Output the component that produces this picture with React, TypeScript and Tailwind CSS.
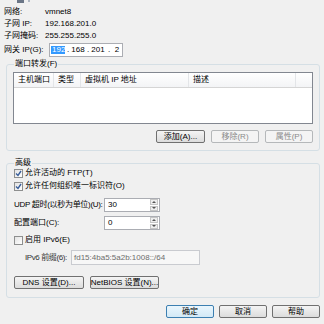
import { FC, ReactNode } from "react";

const font = { fontFamily: '"Liberation Sans", "Noto Sans CJK SC", sans-serif' };

const Btn: FC<{ w: string; children: ReactNode; disabled?: boolean; def?: boolean }> = ({ w, children, disabled, def }) => (
  <div
    className={`${w} h-[13px] flex items-center justify-center rounded-[2px] border leading-none ${
      disabled
        ? "border-[#b5b8ba] bg-[#f4f4f4] text-[#8a8a8a]"
        : def
        ? "border-[#3c7fb1] bg-linear-to-b from-[#eaf6fd] to-[#d3e9f6]"
        : "border-[#707070] bg-linear-to-b from-[#f4f4f4] to-[#dcdcdc]"
    }`}
  >
    {children}
  </div>
);

const Check: FC<{ on?: boolean; label: string }> = ({ on, label }) => (
  <div className="flex items-center h-[10px] leading-none">
    <div className="w-[9px] h-[9px] border border-[#8e8f8f] bg-linear-to-br from-[#e3e3e3] to-white flex items-center justify-center">
      {on && (
        <svg width="7" height="7" viewBox="0 0 7 7">
          <path d="M1 3.5 L3 5.5 L6 1" stroke="#3a5f9b" strokeWidth="1.4" fill="none" />
        </svg>
      )}
    </div>
    <span className="ml-[2px]">{label}</span>
  </div>
);

const Spin: FC<{ value: string }> = ({ value }) => (
  <div className="w-[56px] h-[14px] border border-[#abadb3] bg-white flex items-center">
    <span className="pl-[3px] flex-1 leading-none">{value}</span>
    <div className="w-[8px] h-[12px] mr-[1px] flex flex-col gap-[1px]">
      <div className="flex-1 border border-[#c5c5c5] bg-[#eeeeee] flex items-center justify-center">
        <div className="w-0 h-0 border-l-[2px] border-r-[2px] border-b-[2px] border-l-transparent border-r-transparent border-b-[#555]" />
      </div>
      <div className="flex-1 border border-[#c5c5c5] bg-[#eeeeee] flex items-center justify-center">
        <div className="w-0 h-0 border-l-[2px] border-r-[2px] border-t-[2px] border-l-transparent border-r-transparent border-t-[#555]" />
      </div>
    </div>
  </div>
);

const Info: FC<{ label: string; value: string }> = ({ label, value }) => (
  <div className="flex items-center h-[12px] leading-none">
    <span className="w-[41px]">{label}</span>
    <span>{value}</span>
  </div>
);

const App: FC = () => {
  return (
    <div style={font} className="w-[324px] h-[324px] bg-[#f0f0f0] text-[8px] text-black overflow-hidden flex flex-col whitespace-nowrap">
      <div className="h-[6px] flex items-start pl-[17px] gap-[4px]">
        <div className="w-[7px] h-[3px] bg-[#6a7586]" />
        <div className="w-[2px] h-[2px] bg-[#b0b8c4]" />
      </div>
      <div className="pl-[4px] flex flex-col">
        <Info label="网络:" value="vmnet8" />
        <Info label="子网 IP:" value="192.168.201.0" />
        <Info label="子网掩码:" value="255.255.255.0" />
        <div className="flex items-center h-[14px] mt-[1px] leading-none">
          <span className="w-[45px]">网关 IP(G):</span>
          <div className="w-[74px] h-[14px] border border-[#abadb3] bg-white flex items-center pl-[1px]">
            <span className="bg-[#3399ff] text-white px-[1px] w-[14px]">192</span>
            <span className="w-[6px] text-center">.</span>
            <span className="w-[14px] text-center">168</span>
            <span className="w-[6px] text-center">.</span>
            <span className="w-[14px] text-center">201</span>
            <span className="w-[8px] text-center">.</span>
            <span className="w-[8px] text-center">2</span>
          </div>
        </div>
      </div>

      <div className="ml-[6px] w-[314px] mt-[7px] border border-[#d5dfe5] rounded-[3px] pl-[6px] pr-[5px] pb-[7px]">
        <div className="-mt-[6px] ml-[1px] w-fit bg-[#f0f0f0] px-[1px] leading-[10px]">端口转发(F)</div>
        <div className="mt-[3px] w-[300px] h-[52px] border border-[#828790] bg-white">
          <div className="h-[15px] flex border-b border-[#d5d5d5] bg-linear-to-b from-white to-[#f3f4f6] leading-none">
            <div className="w-[40px] flex items-center pl-[4px] border-r border-[#e3e5e8] overflow-hidden">主机端口</div>
            <div className="w-[27px] flex items-center pl-[4px] border-r border-[#e3e5e8] overflow-hidden">类型</div>
            <div className="w-[108px] flex items-center pl-[4px] border-r border-[#e3e5e8]">虚拟机 IP 地址</div>
            <div className="w-[107px] flex items-center pl-[4px] border-r border-[#e3e5e8]">描述</div>
            <div className="flex-1" />
          </div>
        </div>
        <div className="mt-[6px] flex justify-end gap-[6px] pr-[1px]">
          <Btn w="w-[49px]">添加(A)...</Btn>
          <Btn w="w-[48px]" disabled>移除(R)</Btn>
          <Btn w="w-[48px]" disabled>属性(P)</Btn>
        </div>
      </div>

      <div className="ml-[6px] w-[314px] mt-[12px] border border-[#d5dfe5] rounded-[3px] pl-[6px] pr-[5px] pb-[8px]">
        <div className="-mt-[6px] ml-[1px] w-fit bg-[#f0f0f0] px-[1px] leading-[10px]">高级</div>
        <div className="pl-[1px]">
          <Check on label="允许活动的 FTP(T)" />
          <div className="mt-[3px]">
            <Check on label="允许任何组织唯一标识符(O)" />
          </div>
          <div className="mt-[7px] flex items-center">
            <span className="w-[90px] leading-none tracking-[-0.3px]">UDP 超时(以秒为单位)(U):</span>
            <Spin value="30" />
          </div>
          <div className="mt-[4px] flex items-center">
            <span className="w-[90px] leading-none">配置端口(C):</span>
            <Spin value="0" />
          </div>
          <div className="mt-[5px]">
            <Check label="启用 IPv6(E)" />
          </div>
          <div className="mt-[5px] flex items-center pl-[11px]">
            <span className="w-[46px] leading-none text-[#333] tracking-[-0.4px]">IPv6 前缀(6):</span>
            <div className="w-[129px] h-[15px] border border-[#c9cbd0] bg-[#f7f7f7] flex items-center pl-[2px] text-[#6d6d6d] leading-none">
              fd15:4ba5:5a2b:1008::/64
            </div>
          </div>
          <div className="mt-[11px] flex gap-[6px]">
            <Btn w="w-[70px]">DNS 设置(D)...</Btn>
            <Btn w="w-[69px]">NetBIOS 设置(N)...</Btn>
          </div>
        </div>
      </div>

      <div className="mt-[7px] flex justify-end gap-[5px] pr-[4px]">
        <Btn w="w-[48px]" def>确定</Btn>
        <Btn w="w-[48px]">取消</Btn>
        <Btn w="w-[48px]">帮助</Btn>
      </div>
    </div>
  );
};

export default App;
